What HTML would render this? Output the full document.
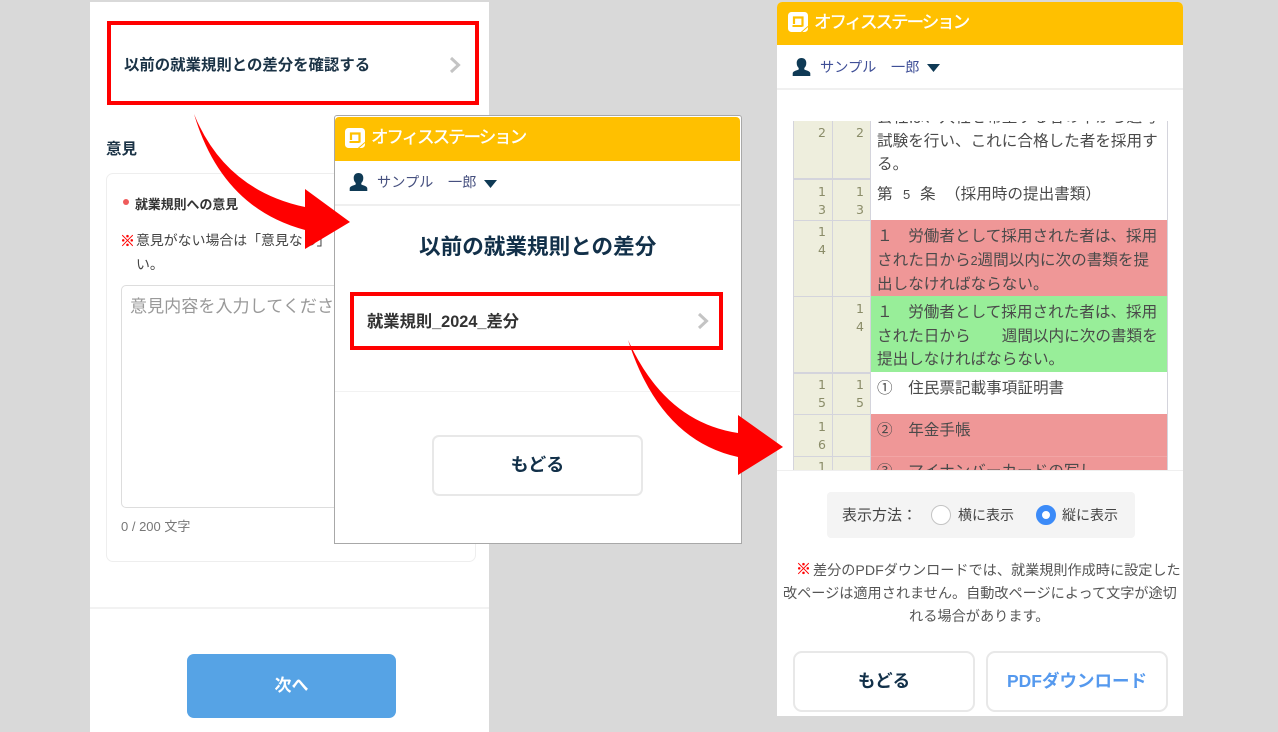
<!DOCTYPE html>
<html lang="ja"><head><meta charset="utf-8"><title>差分</title>
<style>
html,body{margin:0;padding:0}
body{width:1278px;height:732px;position:relative;overflow:hidden;background:#d9d9d9;font-family:"Liberation Sans","Noto Sans CJK JP",sans-serif;color:#444}
#w{position:absolute;left:0;top:0;width:1278px;height:732px;filter:blur(.35px)}
.a{position:absolute;white-space:pre;line-height:1}
.b{position:absolute;box-sizing:border-box}
.t{position:absolute;left:877px;white-space:pre;font-size:15.6px;line-height:23.5px;color:#4a4a4a}
.n{position:absolute;width:12px;font:12.5px/18px "DejaVu Sans",sans-serif;color:#8a8c68;text-align:center}
.logo{position:absolute;font-size:17.5px;font-weight:400;color:#fff;-webkit-text-stroke:.35px #fff;letter-spacing:-2px;white-space:pre;line-height:1}
</style></head><body><div id="w">

<!-- LEFT PANEL -->
<div class="b" style="left:90px;top:2px;width:399px;height:730px;background:#fff"></div>
<div class="b" style="left:107px;top:21px;width:372px;height:84px;border:4px solid #f00"></div>
<div class="a" style="left:124px;top:58px;font-size:15.4px;font-weight:700;color:#1b3346">以前の就業規則との差分を確認する</div>
<svg class="b" style="left:448px;top:55px" width="16" height="20"><path d="M3 3l7.500 7-7.500 7" fill="none" stroke="#c4c4c4" stroke-width="3"/></svg>
<div class="a" style="left:106px;top:142px;font-size:15.5px;font-weight:700;color:#1b3346">意見</div>
<div class="b" style="left:106px;top:173px;width:370px;height:389px;border:1.5px solid #eee;border-radius:7px"></div>
<div class="b" style="left:123px;top:199px;width:6px;height:6px;border-radius:50%;background:#ef5b5b"></div>
<div class="a" style="left:135px;top:199px;font-size:12.9px;font-weight:700;color:#333">就業規則への意見</div>
<div class="a" style="left:120px;top:234px;font-size:15px;font-weight:700;color:#f00;-webkit-text-stroke:.3px #f00">※</div>
<div class="a" style="left:136px;top:234px;font-size:13.9px;color:#444">意見がない場合は「意見なし」</div>
<div class="a" style="left:136px;top:258px;font-size:13.9px;color:#444">い。</div>
<div class="b" style="left:121px;top:285px;width:300px;height:223px;border:1.5px solid #ddd;border-radius:5px"></div>
<div class="a" style="left:130px;top:298px;font-size:17.1px;color:#999">意見内容を入力してくださ</div>
<div class="a" style="left:121px;top:520px;font-size:13px;color:#777">0 / 200 文字</div>
<div class="b" style="left:90px;top:607px;width:399px;height:1.5px;background:#f2f2f2"></div>
<div class="b" style="left:187px;top:654px;width:209px;height:64px;background:#56a3e5;border-radius:7px"></div>
<div class="a" style="left:187px;top:677px;width:209px;text-align:center;font-size:17px;font-weight:700;color:#fff">次へ</div>

<!-- MIDDLE PANEL -->
<div class="b" style="left:334px;top:115px;width:408px;height:429px;background:#fff;border:1.5px solid #a8a8a8;border-radius:3px 3px 0 0"></div>
<div class="b" style="left:335px;top:117px;width:405px;height:44px;background:#ffc000;border-radius:4px 4px 0 0"></div>
<svg class="b" style="left:345px;top:128px" width="21" height="21" viewBox="0 0 21 21"><rect x="0" y="0" width="20" height="20" rx="3.5" fill="#fff"/><path d="M14.500 14.500V5.500H6V12" fill="none" stroke="#ffc000" stroke-width="2.200"/><path d="M4.500 14h10" stroke="#ffc000" stroke-width="2"/><path d="M13 20.500L20.500 14" stroke="#ffc000" stroke-width="1"/></svg>
<div class="logo" style="left:371px;top:129px">オフィスステーション</div>
<svg class="b" style="left:349px;top:173px" width="19" height="18" viewBox="0 0 19 18"><path d="M9.500 0c3 0 4.800 2 4.800 5 0 2.500-1 4-2 5v1.500c2 1 6 1.500 6 4v2.500H.7v-2.500c0-2.500 4-3 6-4V10c-1-1-2-2.500-2-5 0-3 1.800-5 4.800-5z" fill="#0f3a55"/></svg>
<div class="a" style="left:377px;top:176px;font-size:14.2px;color:#46507f">サンプル</div>
<div class="a" style="left:448px;top:176px;font-size:14.2px;color:#46507f">一郎</div>
<svg class="b" style="left:484px;top:180px" width="13" height="8"><path d="M0 0h13L6.500 8z" fill="#0f3a55"/></svg>
<div class="b" style="left:335px;top:204px;width:405px;height:2px;background:#efefef"></div>
<div class="a" style="left:419px;top:236px;font-size:21.6px;font-weight:700;color:#123049">以前の就業規則との差分</div>
<div class="b" style="left:350px;top:292px;width:373px;height:58px;border:4px solid #f00"></div>
<div class="a" style="left:367px;top:314px;font-size:16.3px;font-weight:700;color:#333">就業規則_2024_差分</div>
<svg class="b" style="left:696px;top:311px" width="16" height="20"><path d="M3 3l7.500 7-7.500 7" fill="none" stroke="#c4c4c4" stroke-width="3"/></svg>
<div class="b" style="left:335px;top:390.500px;width:405px;height:1.500px;background:#f2f2f2"></div>
<div class="b" style="left:432px;top:435px;width:211px;height:61px;border:2px solid #e8e8e8;border-radius:7px"></div>
<div class="a" style="left:432px;top:456px;width:211px;text-align:center;font-size:18px;font-weight:700;color:#123049">もどる</div>

<!-- RIGHT PANEL -->
<div class="b" style="left:777px;top:2px;width:406px;height:714px;background:#fff;border-radius:5px 5px 0 0"></div>
<div class="b" style="left:777px;top:2px;width:406px;height:43px;background:#ffc000;border-radius:5px 5px 0 0"></div>
<svg class="b" style="left:788px;top:12px" width="21" height="21" viewBox="0 0 21 21"><rect x="0" y="0" width="20" height="20" rx="3.500" fill="#fff"/><path d="M14.500 14.500V5.500H6V12" fill="none" stroke="#ffc000" stroke-width="2.200"/><path d="M4.500 14h10" stroke="#ffc000" stroke-width="2"/><path d="M13 20.500L20.500 14" stroke="#ffc000" stroke-width="1"/></svg>
<div class="logo" style="left:814px;top:14px">オフィスステーション</div>
<svg class="b" style="left:792px;top:58px" width="19" height="18" viewBox="0 0 19 18"><path d="M9.500 0c3 0 4.800 2 4.800 5 0 2.500-1 4-2 5v1.500c2 1 6 1.500 6 4v2.500H.7v-2.500c0-2.500 4-3 6-4V10c-1-1-2-2.500-2-5 0-3 1.800-5 4.800-5z" fill="#0f3a55"/></svg>
<div class="a" style="left:820px;top:61px;font-size:14.2px;color:#3f4f97">サンプル</div>
<div class="a" style="left:891px;top:61px;font-size:14.2px;color:#3f4f97">一郎</div>
<svg class="b" style="left:927px;top:64px" width="13" height="8"><path d="M0 0h13L6.500 8z" fill="#0f3a55"/></svg>
<div class="b" style="left:777px;top:88px;width:406px;height:2px;background:#f0f0f0"></div>

<!-- TABLE -->
<div class="b" style="left:793px;top:121px;width:375px;height:349px;background:#d4d4dc"></div>
<div class="b" style="left:794px;top:121px;width:37.5px;height:349px;background:#eeeedd"></div>
<div class="b" style="left:833px;top:121px;width:37px;height:349px;background:#eeeedd"></div>
<div class="b" style="left:870.5px;top:121px;width:296px;height:99px;background:#fff"></div>
<div class="b" style="left:870.5px;top:220px;width:296px;height:76px;background:#ef9797"></div>
<div class="b" style="left:870.5px;top:296px;width:296px;height:76px;background:#98ee99"></div>
<div class="b" style="left:870.5px;top:372px;width:296px;height:42px;background:#fff"></div>
<div class="b" style="left:870.5px;top:414px;width:296px;height:56px;background:#ef9797"></div>
<div class="b" style="left:870.5px;top:455.5px;width:296px;height:1px;background:#f2a5a5"></div>
<!-- row separators over number cols -->
<div class="b" style="left:794px;top:178px;width:76px;height:1.5px;background:#d4d4dc"></div>
<div class="b" style="left:794px;top:219.5px;width:76px;height:1.5px;background:#d4d4dc"></div>
<div class="b" style="left:794px;top:295.5px;width:76px;height:1.5px;background:#d4d4dc"></div>
<div class="b" style="left:794px;top:372px;width:76px;height:1.5px;background:#d4d4dc"></div>
<div class="b" style="left:794px;top:413.5px;width:76px;height:1.5px;background:#d4d4dc"></div>
<div class="b" style="left:794px;top:455.5px;width:76px;height:1.5px;background:#d4d4dc"></div>

<div class="n" style="left:816px;top:124px">2</div><div class="n" style="left:854px;top:124px">2</div>
<div class="n" style="left:816px;top:183px">1<br>3</div><div class="n" style="left:854px;top:183px">1<br>3</div>
<div class="n" style="left:816px;top:223px">1<br>4</div><div class="n" style="left:854px;top:300px">1<br>4</div>
<div class="n" style="left:816px;top:376px">1<br>5</div><div class="n" style="left:854px;top:376px">1<br>5</div>
<div class="n" style="left:816px;top:418px">1<br>6</div>
<div class="n" style="left:816px;top:458px">1</div>

<div class="b" style="left:870.5px;top:121px;width:296px;height:57px;overflow:hidden">
<div class="t" style="left:6.5px;top:-15px">会社は、入社を希望する者の中から選考
試験を行い、これに合格した者を採用す
る。</div></div>
<div class="t" style="top:183px">第</div><div class="t" style="left:903px;top:183px;font-size:13px">5</div><div class="t" style="left:920px;top:183px">条</div><div class="t" style="left:945px;top:183px">（採用時の提出書類）</div>
<div class="t" style="top:225px">１　労働者として採用された者は、採用
された日から<span style="font-size:12.5px">2</span>週間以内に次の書類を提
出しなければならない。</div>
<div class="t" style="top:301px">１　労働者として採用された者は、採用
された日から　　週間以内に次の書類を
提出しなければならない。</div>
<div class="t" style="top:377px">①　住民票記載事項証明書</div>
<div class="t" style="top:419px">②　年金手帳</div>
<div class="b" style="left:870.5px;top:457px;width:296px;height:13px;overflow:hidden"><div class="t" style="left:6.5px;top:3px">③　マイナンバーカードの写し</div></div>

<!-- FOOTER -->
<div class="b" style="left:777px;top:470px;width:406px;height:246px;background:#fff;border-top:1px solid #efefef"></div>
<div class="b" style="left:827px;top:492px;width:308px;height:46px;background:#f4f4f4;border-radius:4px"></div>
<div class="a" style="left:842px;top:508px;font-size:15px;color:#444">表示方法：</div>
<div class="b" style="left:931px;top:505px;width:20px;height:20px;border-radius:50%;background:#fff;border:1.5px solid #c4c4c4"></div>
<div class="a" style="left:958px;top:508px;font-size:14px;color:#444">横に表示</div>
<div class="b" style="left:1036px;top:505px;width:20px;height:20px;border-radius:50%;background:#fff;border:6px solid #3c8bf8"></div>
<div class="a" style="left:1062px;top:508px;font-size:14px;color:#444">縦に表示</div>
<div class="a" style="left:796px;top:562px;font-size:15px;font-weight:700;color:#f00;-webkit-text-stroke:.3px #f00">※</div>
<div class="a" style="left:813px;top:563px;font-size:14.15px;color:#555">差分のPDFダウンロードでは、就業規則作成時に設定した</div>
<div class="a" style="left:783px;top:586px;font-size:14.15px;color:#555">改ページは適用されません。自動改ページによって文字が途切</div>
<div class="a" style="left:909px;top:610px;font-size:14.2px;color:#555">れる場合があります。</div>
<div class="b" style="left:793px;top:651px;width:182px;height:61px;border:2px solid #e8e8e8;border-radius:9px"></div>
<div class="a" style="left:793px;top:673px;width:182px;text-align:center;font-size:17.5px;font-weight:700;color:#123049">もどる</div>
<div class="b" style="left:986px;top:651px;width:182px;height:61px;border:2px solid #e8e8e8;border-radius:9px"></div>
<div class="a" style="left:986px;top:673px;width:182px;text-align:center;font-size:17.5px;font-weight:700;color:#5599ee">PDFダウンロード</div>

<!-- ARROWS -->
<svg class="b" style="left:0;top:0" width="1278" height="732" viewBox="0 0 1278 732">
<path d="M194 114Q225 190 305 207V189L350 222L305 249V230Q222 208 194 114Z" fill="#f00"/>
<path d="M628 340Q665 422 738 433V415L783 447L738 475V457Q660 440 628 340Z" fill="#f00"/>
</svg>
</div></body></html>
